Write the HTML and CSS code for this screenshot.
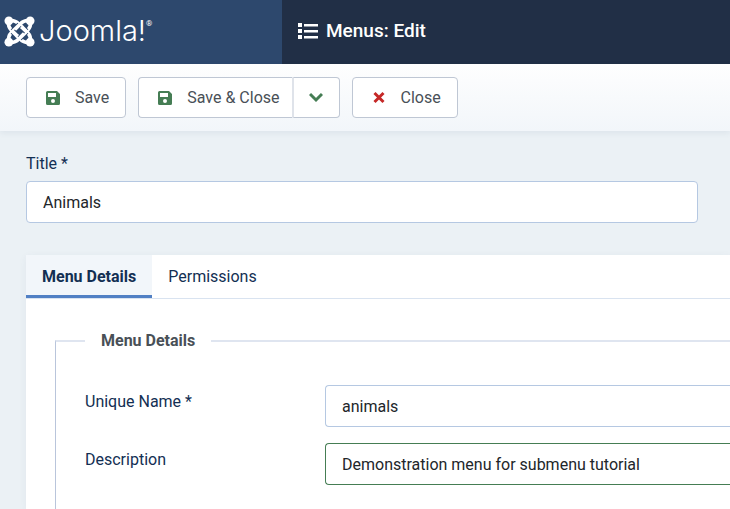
FILE: index.html
```html
<!DOCTYPE html>
<html lang="en">
  <head>
    <meta charset="UTF-8" />
    <meta name="viewport" content="width=device-width, initial-scale=1.0" />
    <title>Menus: Edit</title>
    <link rel="stylesheet" href="styles.css">
  </head>
  <body>
    <header class="header">
      <a class="logo" href="#">
        <svg class="logo-mark" viewBox="0 0 32 32" aria-hidden="true">
          <!-- four interlaced arms, one per corner -->
          <g class="casing">
            <path d="M5 5 C4 10 5 12 8 15 L17 24" />
            <path d="M5 27 C10 28 12 27 15 24 L24 15" />
            <path d="M27 27 C28 22 27 20 24 17 L15 8" />
            <path d="M27 5 C22 4 20 5 17 8 L8 17" />
          </g>
          <g class="strand">
            <path d="M5 5 C4 10 5 12 8 15 L17 24" />
            <path d="M27 27 C28 22 27 20 24 17 L15 8" />
            <path d="M5 5 C10 4 12 5 15 8" />
            <path d="M27 27 C22 28 20 27 17 24" />
            <path d="M5 27 C4 22 5 20 8 17" />
            <path d="M27 5 C28 10 27 12 24 15" />
          </g>
          <path class="casing" d="M9 16 L16 9 M16 23 L23 16" />
          <g class="strand">
            <path d="M5 27 C10 28 12 27 15 24 L24 15" />
            <path d="M27 5 C22 4 20 5 17 8 L8 17" />
          </g>
          <path class="casing" d="M9 16 L13 20 M19 12 L23 16" />
          <path class="strand" d="M8 15 L14 21 M18 11 L24 17" />
          <g fill="#fff">
            <circle cx="5" cy="5" r="4.500" />
            <circle cx="27" cy="5" r="4.500" />
            <circle cx="5" cy="27" r="4.500" />
            <circle cx="27" cy="27" r="4.500" />
          </g>
        </svg>
        <span class="logo-text">Joomla!</span><sup class="logo-reg">®</sup>
      </a>
      <div class="page-title">
        <svg class="title-icon" viewBox="0 0 20 16" aria-hidden="true">
          <path fill="#fff" d="M0 0h4v4H0zM0 6h4v4H0zM0 12h4v4H0zM6 1h14v2.500H6zM6 7h14v2.500H6zM6 13h14v2.500H6z" />
        </svg>
        <h1>Menus: Edit</h1>
      </div>
    </header>

    <div class="toolbar">
      <button type="button" class="btn">
        <svg class="icon save" viewBox="0 0 20 16" aria-hidden="true">
          <path fill-rule="evenodd" d="M4.500 1H14l3 3v9.500a1.500 1.500 0 0 1-1.500 1.500h-11A1.500 1.500 0 0 1 3 13.500v-11A1.500 1.500 0 0 1 4.500 1zM5 3v4h8V3zM10 9a2 2 0 1 0 0 4 2 2 0 0 0 0-4z" />
        </svg>
        Save
      </button>
      <div class="btn-group">
        <button type="button" class="btn">
          <svg class="icon save" viewBox="0 0 20 16" aria-hidden="true">
            <path fill-rule="evenodd" d="M4.500 1H14l3 3v9.500a1.500 1.500 0 0 1-1.500 1.500h-11A1.500 1.500 0 0 1 3 13.500v-11A1.500 1.500 0 0 1 4.500 1zM5 3v4h8V3zM10 9a2 2 0 1 0 0 4 2 2 0 0 0 0-4z" />
          </svg>
          Save &amp; Close
        </button>
        <button type="button" class="btn btn-toggle" aria-label="More save options">
          <svg class="icon toggle" viewBox="0 0 14 16" aria-hidden="true">
            <path d="M1 4l6 6 6-6" />
          </svg>
        </button>
      </div>
      <button type="button" class="btn">
        <svg class="icon close" viewBox="0 0 20 16" aria-hidden="true">
          <path d="M5.500 3l9 9M14.500 3l-9 9" />
        </svg>
        Close
      </button>
    </div>

    <form class="content">
      <div class="title-group">
        <label for="title">Title *</label>
        <input type="text" id="title" class="form-control" value="Animals" required />
      </div>

      <div class="panel">
        <div class="tabs" role="tablist">
          <button type="button" class="tab active" role="tab" aria-selected="true">Menu Details</button>
          <button type="button" class="tab" role="tab" aria-selected="false">Permissions</button>
        </div>
        <div class="tab-content">
          <fieldset class="details">
            <legend>Menu Details</legend>
            <div class="control-group">
              <label for="unique-name">Unique Name *</label>
              <input type="text" id="unique-name" class="form-control bleed" value="animals" required />
            </div>
            <div class="control-group">
              <label for="description">Description</label>
              <input type="text" id="description" class="form-control bleed valid" value="Demonstration menu for submenu tutorial" />
            </div>
          </fieldset>
        </div>
      </div>
    </form>
  </body>
</html>
```
FILE: styles.css
```css
* {
  box-sizing: border-box;
}

body {
  display: flex;
  flex-direction: column;
  min-height: 100vh;
  margin: 0;
  background-color: #ebf1f5;
  color: #22262a;
  font-family: Roboto, "Liberation Sans", sans-serif;
  font-size: 16px;
  line-height: 24px;
}

button,
input {
  font: inherit;
}

/* Header */
.header {
  display: flex;
  height: 64px;
  background-color: #212f46;
  color: #fff;
}

.logo {
  display: flex;
  align-items: center;
  width: 282px;
  padding: 0 0 2px 4px;
  background-color: #2d486d;
  color: #fff;
  text-decoration: none;
}

.logo-mark {
  width: 31px;
  height: 31px;
  margin-right: 4px;
}

.casing,
.strand {
  fill: none;
  stroke: #2d486d;
  stroke-width: 6;
}

.strand {
  stroke: #fff;
  stroke-width: 4;
}

.logo-text {
  font-family: Inter, sans-serif;
  font-size: 29px;
  font-weight: 300;
}

.logo-reg {
  align-self: flex-start;
  margin-top: 18px;
  font-size: 8px;
  line-height: 12px;
}

.page-title {
  display: flex;
  align-items: center;
  gap: 8px;
  padding: 0 16px 3px;
}

.title-icon {
  width: 20px;
  height: 16px;
}

.page-title h1 {
  margin: 0;
  font-size: 19px;
  font-weight: 500;
}

/* Toolbar */
.toolbar {
  display: flex;
  gap: 12px;
  padding: 13px 26px;
  background: linear-gradient(#fefefe, #f2f6fa);
  box-shadow: 0 2px 6px rgba(45, 72, 109, 0.08);
}

.btn {
  display: flex;
  align-items: center;
  gap: 12px;
  height: 41px;
  padding: 0 16px;
  border: 1px solid #bfc7d4;
  border-radius: 4px;
  background-color: #fff;
  color: #495057;
  cursor: pointer;
}

.btn:hover {
  background-color: #f2f6fa;
}

.btn-group {
  display: flex;
}

.btn-group .btn:first-child {
  border-right: none;
  border-radius: 4px 0 0 4px;
  padding-right: 12px;
}

.btn-group .btn-toggle {
  border-left: 2px solid #dfe3ea;
  border-radius: 0 4px 4px 0;
  padding-left: 15px;
}

.icon {
  width: 20px;
  height: 16px;
  fill: none;
  stroke-width: 3;
}

.icon.save {
  fill: #457d54;
}

.icon.toggle {
  width: 14px;
  stroke: #457d54;
  stroke-width: 3;
}

.icon.close {
  stroke: #c52827;
}

/* Form */
.content {
  display: flex;
  flex: 1;
  flex-direction: column;
  padding: 21px 0 0 26px;
}

label {
  color: #132f53;
}

.title-group {
  display: flex;
  flex-direction: column;
  gap: 5px;
  padding-right: 32px;
}

.form-control {
  width: 100%;
  height: 42px;
  padding: 0 16px;
  border: 1px solid #b5c8e2;
  border-radius: 4px;
  background-color: #fff;
  color: #22262a;
}

.form-control.bleed {
  border-right: none;
  border-radius: 4px 0 0 4px;
}

.form-control.valid {
  border-color: #457d54;
}

.panel {
  display: flex;
  flex: 1;
  flex-direction: column;
  margin-top: 32px;
  background-color: #fff;
  box-shadow: 0 2px 8px rgba(45, 72, 109, 0.06);
}

.tabs {
  display: flex;
  height: 44px;
  border-bottom: 1px solid #d9e3f0;
}

.tab {
  padding: 0 16px;
  border: none;
  background: none;
  color: #132f53;
  cursor: pointer;
}

.tab.active {
  background-color: #f2f6fa;
  box-shadow: inset 0 -3px #5180c4;
  font-weight: 700;
}

.tab-content {
  display: flex;
  flex: 1;
  padding: 30px 0 0 29px;
}

.details {
  flex: 1;
  min-width: 0;
  margin: 0;
  padding: 32px 0 0 29px;
  border: 1px solid #b9c5db;
  border-top: 2px solid #dfe5f0;
  border-right: none;
  border-bottom: none;
}

.details legend {
  padding: 0 16px;
  color: #495057;
  font-weight: 700;
}

.control-group {
  display: grid;
  grid-template-columns: 240px 1fr;
  margin-bottom: 16px;
}

.control-group label {
  padding-top: 5px;
}
```
